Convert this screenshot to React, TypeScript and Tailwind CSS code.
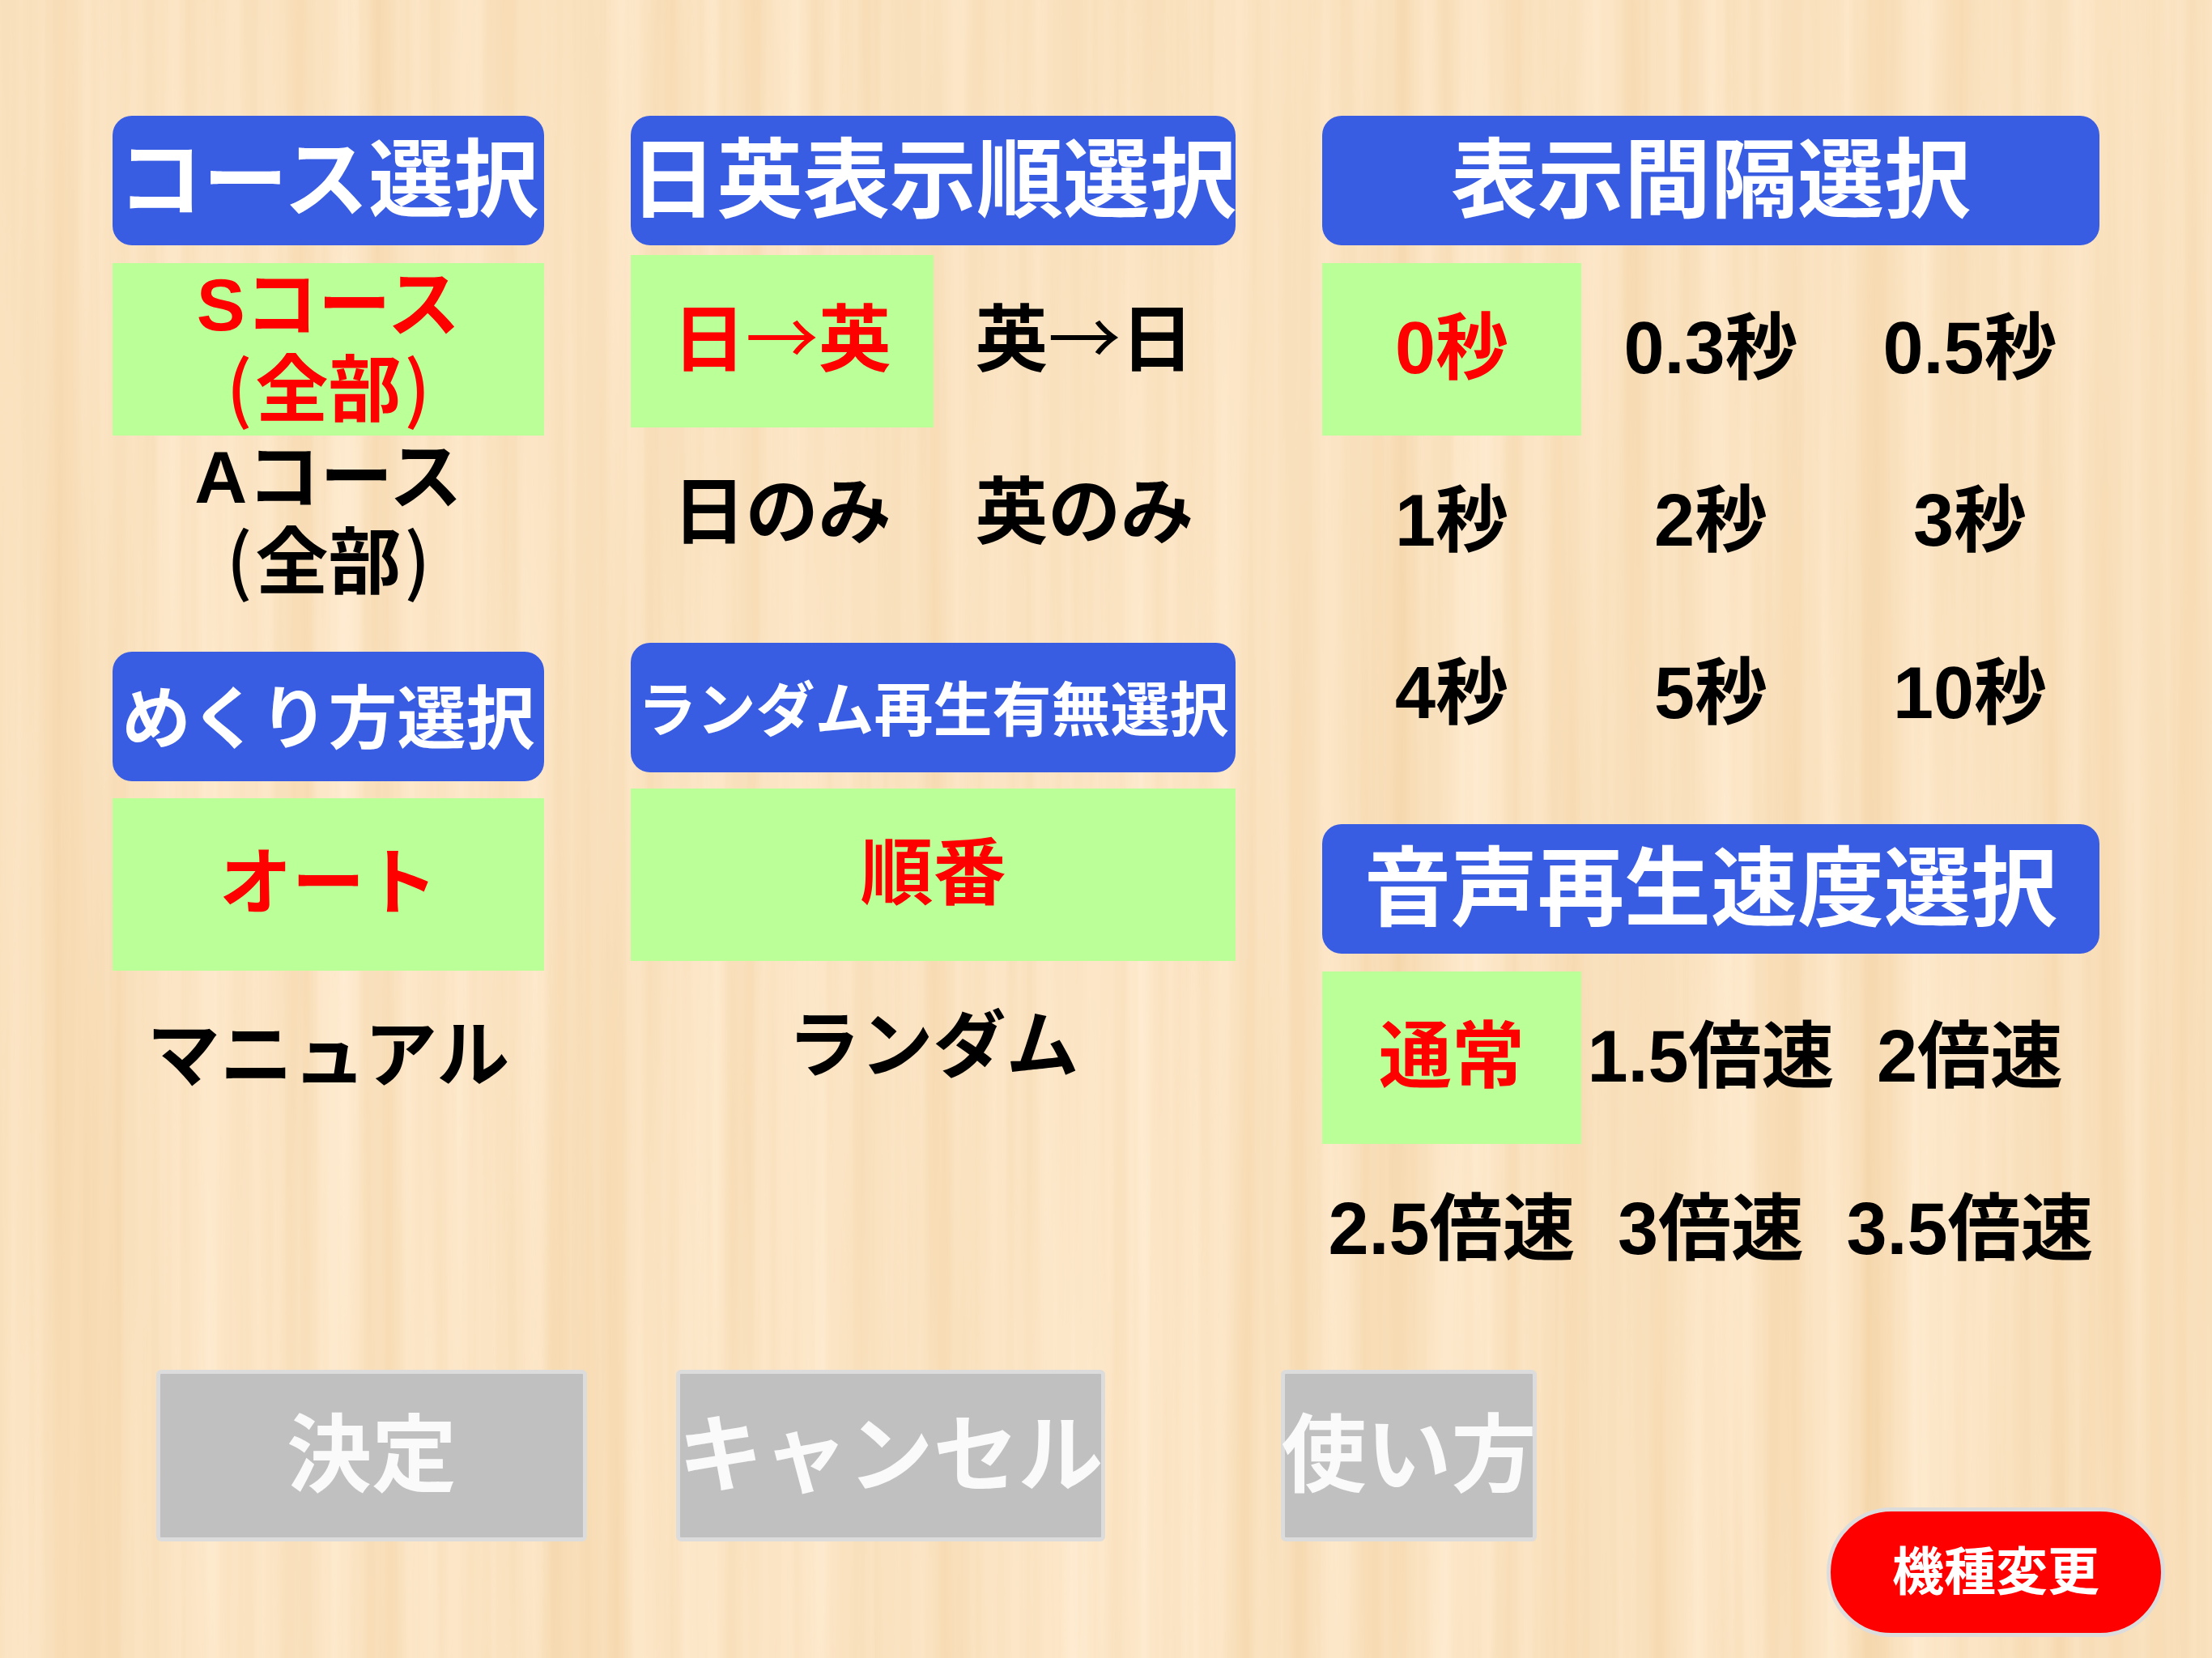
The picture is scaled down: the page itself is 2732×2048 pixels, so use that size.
const font = { fontFamily: '"Liberation Sans", "Noto Sans CJK JP", sans-serif' };

function WoodGrain() {
  return (
    <svg className="absolute inset-0 w-full h-full" aria-hidden="true">
      <filter id="wood" x="0" y="0" width="100%" height="100%" colorInterpolationFilters="sRGB">
        <feTurbulence type="fractalNoise" baseFrequency="0.02 0.0003" numOctaves={5} seed={23} />
        <feColorMatrix
          type="matrix"
          values="0.05 0 0 0 0.955  0.11 0 0 0 0.83  0.2 0 0 0 0.65  0 0 0 0 1"
        />
      </filter>
      <rect width="100%" height="100%" filter="url(#wood)" />
    </svg>
  );
}

function Header({ label, size = 'text-[107px]', drop }: { label: string; size?: string; drop?: boolean }) {
  return (
    <div
      className={`h-[160px] rounded-[24px] bg-[#385ce2] text-white font-bold flex items-center justify-center whitespace-nowrap ${size} ${
        drop ? 'pt-[8px]' : ''
      }`}
    >
      {label}
    </div>
  );
}

function Option({ label, selected }: { label: React.ReactNode; selected?: boolean }) {
  return (
    <div
      className={`h-[213px] pb-[4px] flex items-center justify-center text-center font-bold text-[90px] leading-[104px] whitespace-nowrap ${
        selected ? 'bg-[#bbff99] text-[#ff0000]' : 'text-black'
      }`}
    >
      <div>{label}</div>
    </div>
  );
}

function Arrow() {
  return <span className="font-['Noto_Sans_CJK_JP'] font-normal leading-none">→</span>;
}

function Paren({ label }: { label: string }) {
  return <span className="font-['Noto_Sans_CJK_JP'] font-medium leading-none mx-[4px]">{label}</span>;
}

function CourseLabel({ name }: { name: string }) {
  return (
    <>
      {name}
      <br />
      <Paren label="(" />
      全部
      <Paren label=")" />
    </>
  );
}

function GrayButton({ label, width }: { label: string; width: string }) {
  return (
    <button
      className={`h-[212px] ${width} shrink-0 rounded-[6px] border-[5px] border-[#dcdcdc] bg-[#c0c0c0] text-[#fafafa] font-bold text-[105px] flex items-center justify-center whitespace-nowrap`}
    >
      {label}
    </button>
  );
}

export default function App() {
  return (
    <div className="relative w-[2732px] h-[2048px] overflow-hidden bg-[#f9e1bd]" style={font}>
      <WoodGrain />
      <div className="relative flex flex-col pt-[143px]">
        <div className="flex h-[1483px] pl-[139px] gap-[107px]">
          {/* left column */}
          <div className="w-[533px] flex flex-col">
            <Header label="コース選択" size="text-[105px]" />
            <div className="mt-[22px]">
              <Option selected label={<CourseLabel name="Sコース" />} />
              <Option label={<CourseLabel name="Aコース" />} />
            </div>
            <div className="mt-[54px]">
              <Header label="めくり方選択" size="text-[85px]" drop />
            </div>
            <div className="mt-[21px]">
              <Option label="オート" selected />
              <Option label="マニュアル" />
            </div>
          </div>

          {/* middle column */}
          <div className="w-[747px] flex flex-col">
            <Header label="日英表示順選択" />
            <div className="mt-[12px] grid grid-cols-2">
              <Option
                selected
                label={
                  <>
                    日<Arrow />英
                  </>
                }
              />
              <Option
                label={
                  <>
                    英<Arrow />日
                  </>
                }
              />
              <Option label="日のみ" />
              <Option label="英のみ" />
            </div>
            <div className="mt-[53px]">
              <Header label="ランダム再生有無選択" size="text-[73px]" drop />
            </div>
            <div className="mt-[20px]">
              <Option label="順番" selected />
              <Option label="ランダム" />
            </div>
          </div>

          {/* right column */}
          <div className="w-[960px] flex flex-col">
            <Header label="表示間隔選択" />
            <div className="mt-[22px] grid grid-cols-3">
              <Option label="0秒" selected />
              <Option label="0.3秒" />
              <Option label="0.5秒" />
              <Option label="1秒" />
              <Option label="2秒" />
              <Option label="3秒" />
              <Option label="4秒" />
              <Option label="5秒" />
              <Option label="10秒" />
            </div>
            <div className="mt-[54px]">
              <Header label="音声再生速度選択" />
            </div>
            <div className="mt-[22px] grid grid-cols-3">
              <Option label="通常" selected />
              <Option label="1.5倍速" />
              <Option label="2倍速" />
              <Option label="2.5倍速" />
              <Option label="3倍速" />
              <Option label="3.5倍速" />
            </div>
          </div>
        </div>

        {/* bottom buttons */}
        <div className="mt-[66px] flex items-start pl-[193px] pr-[58px]">
          <GrayButton label="決定" width="w-[532px]" />
          <div className="ml-[110px]">
            <GrayButton label="キャンセル" width="w-[530px]" />
          </div>
          <div className="ml-[217px]">
            <GrayButton label="使い方" width="w-[316px]" />
          </div>
          <button className="ml-auto mt-[170px] w-[418px] h-[160px] rounded-full border-[5px] border-[#dcdcdc] bg-[#ff0000] text-white font-bold text-[64px] flex items-center justify-center whitespace-nowrap">
            機種変更
          </button>
        </div>
      </div>
    </div>
  );
}
